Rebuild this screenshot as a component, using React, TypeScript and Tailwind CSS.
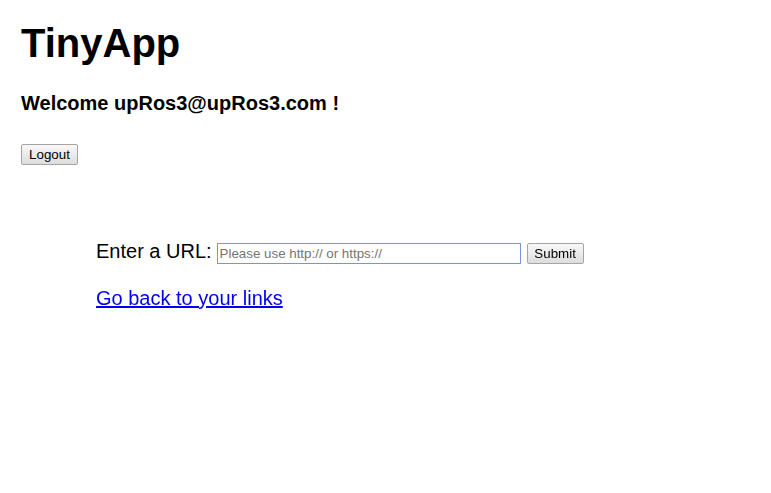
export default function App() {
  return (
    <div className="min-h-[493px] bg-white px-[21px] pt-[20px] text-black font-['Liberation_Sans',Arial,sans-serif]">
      <h1 className="text-[40px] font-bold leading-[46px]">TinyApp</h1>
      <h3 className="mt-[26px] text-[20px] font-bold leading-[23px]">Welcome upRos3@upRos3.com !</h3>
      <button className="mt-[29px] h-[21px] w-[57px] rounded-[2px] border border-[#a5a5a5] bg-gradient-to-b from-[#f8f8f8] to-[#dddddd] text-[13.33px] leading-[19px]">
        Logout
      </button>
      <form className="mt-[74px] ml-[75px]" onSubmit={(e) => e.preventDefault()}>
        <div className="flex items-start">
          <label className="text-[20px] leading-[23px]">Enter a URL:</label>
          <input
            autoFocus
            type="text"
            placeholder="Please use http:// or https://"
            className="ml-[5px] mt-[3px] h-[21px] w-[304px] border border-[#7496df] px-[2px] text-[13.33px] leading-[19px] caret-black outline-none placeholder:text-[#757575]"
          />
          <button
            type="submit"
            className="ml-[6px] mt-[3px] h-[21px] w-[57px] rounded-[2px] border border-[#a5a5a5] bg-gradient-to-b from-[#f8f8f8] to-[#dddddd] text-[13.33px] leading-[19px]"
          >
            Submit
          </button>
        </div>
        <a href="#" className="mt-[23px] block w-fit text-[20px] leading-[23px] text-[#0000ee] underline">
          Go back to your links
        </a>
      </form>
    </div>
  );
}
